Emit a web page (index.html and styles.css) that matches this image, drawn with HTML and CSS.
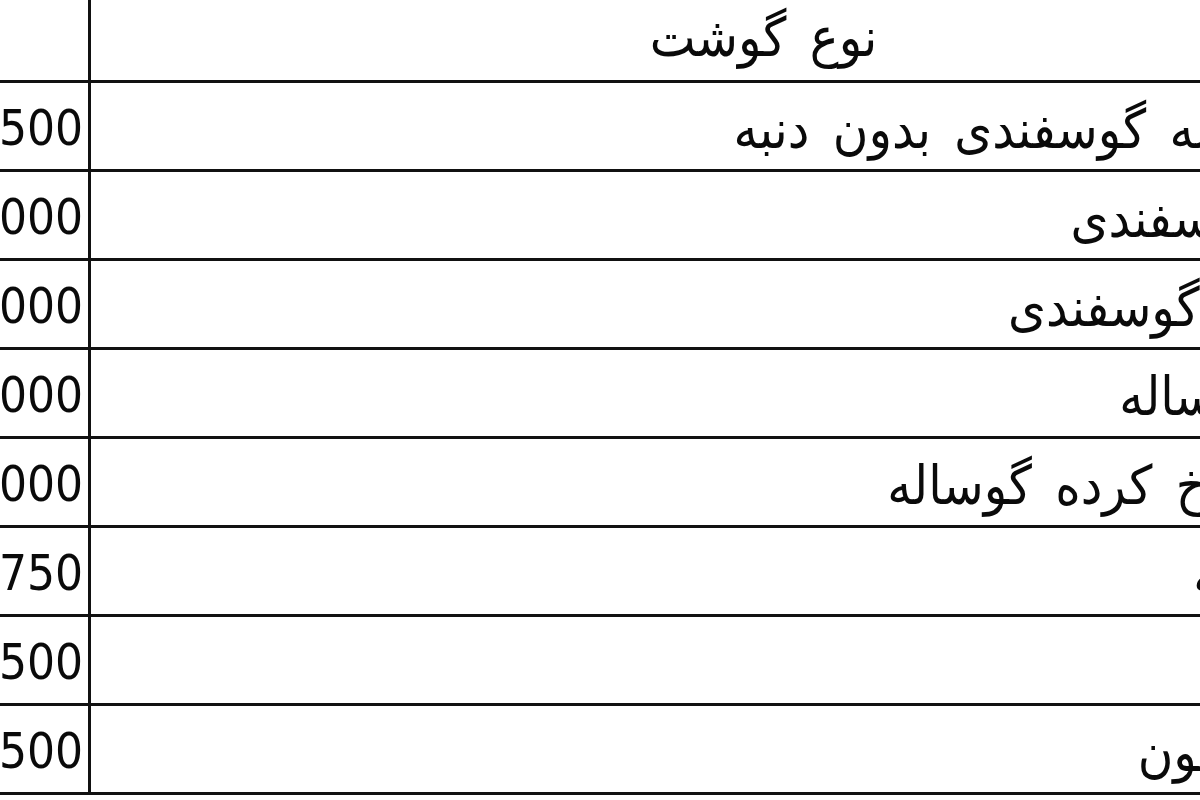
FILE: index.html
```html
<!DOCTYPE html>
<html lang="fa">
<head>
<meta charset="utf-8">
<title>قیمت گوشت</title>
<link rel="stylesheet" href="styles.css">
</head>
<body>
<div class="sheet">
  <div class="cell num"></div>
  <div class="cell name head">نوع گوشت</div>

  <div class="cell num">500</div>
  <div class="cell name">گوشت لاشه گوسفندی بدون دنبه</div>

  <div class="cell num">000</div>
  <div class="cell name">ماهیچه گوسفندی</div>

  <div class="cell num">000</div>
  <div class="cell name">سر دست گوسفندی</div>

  <div class="cell num">000</div>
  <div class="cell name">گوشت گوساله</div>

  <div class="cell num">000</div>
  <div class="cell name">گوشت چرخ کرده گوساله</div>

  <div class="cell num">750</div>
  <div class="cell name">سینه جوجه</div>

  <div class="cell num">500</div>
  <div class="cell name">مرغ</div>

  <div class="cell num">500</div>
  <div class="cell name">سینه بوقلمون</div>
</div>
</body>
</html>
```

FILE: styles.css
```css
html, body {
  margin: 0;
  padding: 0;
  background: #ffffff;
  overflow: hidden;
}

body {
  width: 1200px;
  height: 800px;
}

.sheet {
  display: grid;
  grid-template-columns: 291px 1345px;
  grid-auto-rows: 89px;
  margin: -6px 0 0 -200px;
  width: 1636px;
  font-family: "DejaVu Sans Condensed", "DejaVu Sans", sans-serif;
  font-stretch: semi-condensed;
  color: #0a0a0a;
}

.cell {
  box-sizing: border-box;
  border-bottom: 3px solid #111111;
  display: flex;
  align-items: center;
  white-space: nowrap;
  overflow: hidden;
}

.num {
  border-right: 3px solid #111111;
  justify-content: flex-end;
  padding: 4px 5px 0 0;
  font-size: 49px;
}

.name {
  direction: rtl;
  justify-content: flex-start;
  padding: 6px 12px 0 0;
  font-size: 54px;
  word-spacing: 8px;
}

.head {
  justify-content: center;
  padding: 0;
  font-size: 54px;
}
```
